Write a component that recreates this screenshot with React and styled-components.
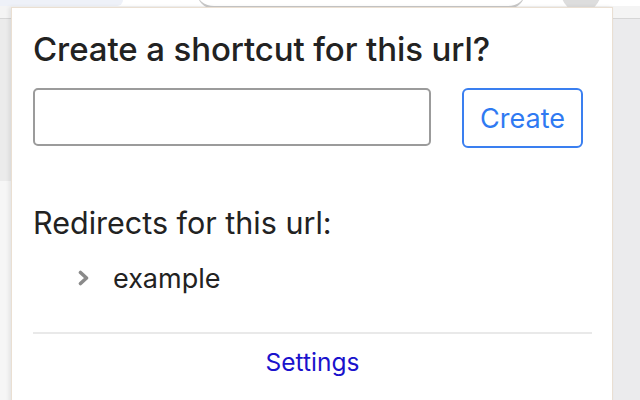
import React from "react";
import styled, { createGlobalStyle } from "styled-components";

const GlobalStyle = createGlobalStyle`
  html, body {
    margin: 0;
    padding: 0;
    height: 100%;
    overflow: hidden;
  }
  body {
    font-family: Inter, Roboto, "Liberation Sans", Arial, sans-serif;
    background: #ebebed;
  }
`;

const Browser = styled.div`
  position: relative;
  width: 640px;
  height: 400px;
  display: flex;
  flex-direction: column;
  overflow: hidden;
`;

const ChromeBar = styled.div`
  height: 18px;
  display: flex;
  align-items: flex-start;
  overflow: hidden;
  background: linear-gradient(#ffffff 0 6px, #f4f4f4 6px);
  border-bottom: 1px solid #d6d6d6;
`;

const Tab = styled.div`
  width: 123px;
  height: 6px;
  flex: 0 0 auto;
  background: #eef1f8;
  border-bottom-right-radius: 6px;
`;

const UrlPill = styled.div`
  width: 328px;
  height: 34px;
  flex: 0 0 auto;
  margin: -28px 0 0 74px;
  border-radius: 17px;
  background: #ffffff;
  border-bottom: 3px solid #c8c8c8;
`;

const ChromeButton = styled.div`
  width: 40px;
  height: 40px;
  flex: 0 0 auto;
  margin: -28px 0 0 36px;
  border-radius: 50%;
  background: #dddddd;
`;

const PageArea = styled.div`
  flex: 1;
  display: flex;
`;

const SideStrip = styled.div`
  width: 11px;
  display: flex;
  flex-direction: column;
`;

const SideTop = styled.div`
  height: 162px;
  background: #ebebeb;
`;

const SideBottom = styled.div`
  flex: 1;
  background: #f6f6f6;
`;

const Popup = styled.div`
  position: absolute;
  top: 7px;
  left: 11px;
  width: 559px;
  height: 420px;
  padding: 0 20px 0 21px;
  background: #ffffff;
  border: 1px solid #eadfd2;
  box-shadow: -2px 0 4px rgba(0, 0, 0, 0.08);
  color: #222222;
`;

const Title = styled.h1`
  margin: 23px 0 0;
  font-size: 33px;
  font-weight: 500;
  line-height: 36px;
  letter-spacing: -0.1px;
`;

const FormRow = styled.div`
  display: flex;
  align-items: flex-start;
  gap: 31px;
  margin-top: 21px;
`;

const Input = styled.input`
  box-sizing: border-box;
  width: 398px;
  height: 58px;
  border: 2px solid #9b9b9b;
  border-radius: 5px;
  background: #ffffff;
  outline: none;
  font-size: 24px;
  padding: 0 12px;
`;

const CreateButton = styled.button`
  box-sizing: border-box;
  width: 121px;
  height: 60px;
  border: 2px solid #3a7ff0;
  border-radius: 6px;
  background: #ffffff;
  color: #2f7af2;
  font-family: inherit;
  font-size: 27px;
  font-weight: 400;
  padding: 0;
`;

const SectionTitle = styled.h2`
  margin: 58px 0 0;
  font-size: 30.5px;
  font-weight: 400;
  line-height: 34px;
`;

const RedirectList = styled.ul`
  list-style: none;
  margin: 22px 0 0;
  padding: 0 0 0 45px;
`;

const RedirectItem = styled.li`
  display: flex;
  align-items: center;
  gap: 23px;
  font-size: 27px;
  line-height: 34px;
`;

const Chevron = styled.svg`
  width: 12px;
  height: 18px;
  flex: 0 0 auto;
  margin-top: -2px;
`;

const Divider = styled.hr`
  margin: 36px 0 0;
  border: 0;
  border-top: 2px solid #e9e9e9;
`;

const Footer = styled.div`
  display: flex;
  justify-content: center;
  padding-top: 13px;
`;

const SettingsLink = styled.a`
  color: #1a12cc;
  font-size: 24.5px;
  line-height: 30px;
  text-decoration: none;
`;

export default function App() {
  const redirects = ["example"];

  return (
    <Browser>
      <GlobalStyle />
      <ChromeBar>
        <Tab />
        <UrlPill />
        <ChromeButton />
      </ChromeBar>
      <PageArea>
        <SideStrip>
          <SideTop />
          <SideBottom />
        </SideStrip>
      </PageArea>
      <Popup>
        <Title>Create a shortcut for this url?</Title>
        <FormRow>
          <Input type="text" />
          <CreateButton>Create</CreateButton>
        </FormRow>
        <SectionTitle>Redirects for this url:</SectionTitle>
        <RedirectList>
          {redirects.map((item) => (
            <RedirectItem key={item}>
              <Chevron viewBox="0 0 12 18">
                <polyline
                  points="2.5,3.5 8.5,9 2.5,14.5"
                  fill="none"
                  stroke="#8a8a8a"
                  strokeWidth="3.6"
                  strokeLinejoin="round"
                  strokeLinecap="round"
                />
              </Chevron>
              <span>{item}</span>
            </RedirectItem>
          ))}
        </RedirectList>
        <Divider />
        <Footer>
          <SettingsLink href="#">Settings</SettingsLink>
        </Footer>
      </Popup>
    </Browser>
  );
}
